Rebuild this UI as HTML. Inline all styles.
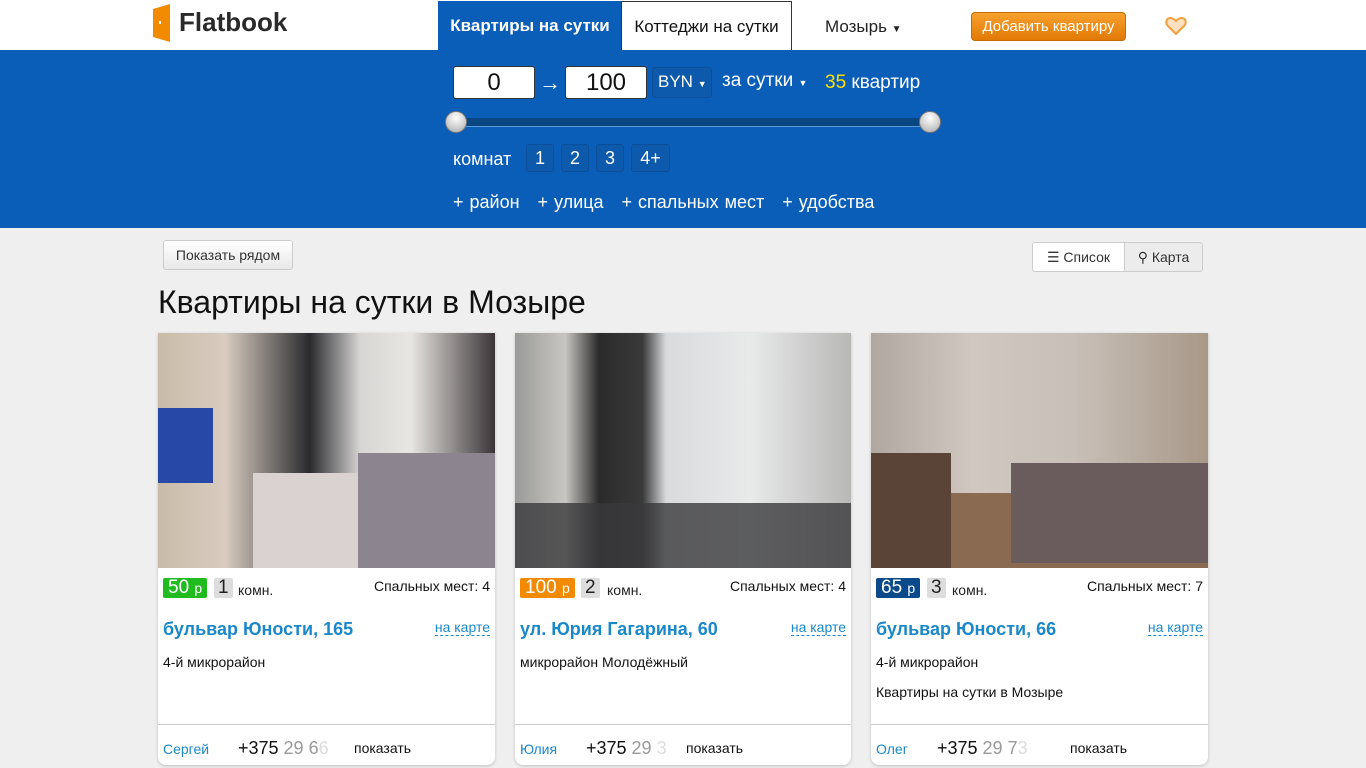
<!DOCTYPE html>
<html><head><meta charset="utf-8"><style>
*{box-sizing:border-box;margin:0;padding:0}
body{width:1366px;height:768px;overflow:hidden;background:#efefef;font-family:"Liberation Sans",sans-serif;position:relative}
.a{position:absolute}
.top{left:0;top:0;width:1366px;height:50px;background:#fff}
.blue{left:0;top:50px;width:1366px;height:178px;background:#0a5eb8}
.inp{background:#fff;border:1px solid #333;border-radius:3px;height:33px;font-size:24px;text-align:center;line-height:31px;color:#111}
.w{color:#fff}
.rb{border:1px solid #0b4f9a;background:#0d5aac;border-radius:3px;color:#fff;font-size:18px;text-align:center;height:28px;line-height:26px}
.card{background:#fff;border-radius:0 0 8px 8px;box-shadow:0 1px 3px rgba(0,0,0,.2);height:432px;top:333px}
.card .img{position:absolute;left:0;top:0;right:0;height:235px}
.pr{position:absolute;top:245px;left:5px;height:20px;font-size:19px;line-height:20px;color:#fff;padding:0 5px;border-radius:2px}
.pr small{font-size:14px}
.rm{position:absolute;top:245px;height:20px;background:#ddd;font-size:19px;line-height:20px;padding:0 4px;color:#222;border-radius:2px}
.km{position:absolute;top:249px;font-size:14px;color:#222}
.sp{position:absolute;right:5px;top:245px;font-size:14px;color:#111}
.st{position:absolute;left:5px;top:286px;font-size:18px;font-weight:bold;color:#1a88c9}
.map{position:absolute;right:5px;top:286px;font-size:14px;color:#1a88c9;border-bottom:1px dashed #1a88c9}
.d{position:absolute;left:5px;font-size:14px;color:#111}
.hr{position:absolute;left:0;right:0;top:391px;border-top:1px solid #ccc}
.nm{position:absolute;left:5px;top:408px;font-size:14px;color:#1a88c9}
.ph{position:absolute;top:405px;font-size:18px;color:#111}
.ph span{color:#999}
.ph i{font-style:normal;color:#ddd}
.sh{position:absolute;top:407px;font-size:14px;color:#111}
</style></head><body>
<div class="a top"></div>
<svg class="a" style="left:153px;top:4px" width="18" height="38"><polygon points="0,5 17,0 17,38 0,33" fill="#f28a00"/><rect x="6" y="17" width="2" height="3" fill="#fff"/></svg>
<div class="a" style="left:179px;top:7px;font-size:26px;font-weight:bold;color:#2a2a2a">Flatbook</div>
<div class="a" style="left:438px;top:1px;width:184px;height:49px;background:#0a5eb8;color:#fff;font-size:17px;font-weight:bold;line-height:49px;text-align:center">Квартиры на сутки</div>
<div class="a" style="left:621px;top:1px;width:171px;height:49px;border:1px solid #333;border-bottom:none;font-size:17px;line-height:49px;text-align:center;color:#111">Коттеджи на сутки</div>
<div class="a" style="left:825px;top:17px;font-size:17px;color:#222">Мозырь <span style="font-size:10px">▼</span></div>
<div class="a" style="left:971px;top:12px;width:155px;height:29px;border-radius:4px;background:linear-gradient(#f7a12e,#e27905);border:1px solid #c56a05;color:#fff;font-size:15px;text-align:center;line-height:27px">Добавить квартиру</div>
<svg class="a" style="left:1165px;top:16px" width="22" height="20"><path d="M11 18 L3 10 C0 7 1 2 5.5 2 C8 2 10 4 11 5 C12 4 14 2 16.5 2 C21 2 22 7 19 10 Z" fill="#fde0c0" stroke="#f0a040" stroke-width="2"/></svg>
<div class="a blue"></div>
<div class="a inp" style="left:453px;top:66px;width:82px">0</div>
<div class="a w" style="left:539px;top:70px;font-size:22px">→</div>
<div class="a inp" style="left:565px;top:66px;width:82px">100</div>
<div class="a rb" style="left:652px;top:67px;width:60px;height:31px;line-height:28px;font-size:17px;text-align:left;padding-left:5px">BYN <span style="font-size:9px">▼</span></div>
<div class="a w" style="left:722px;top:70px;font-size:19px">за сутки <span style="font-size:9px">▼</span></div>
<div class="a w" style="left:825px;top:72px;font-size:19px"><span style="color:#ffe000">35</span> квартир</div>
<div class="a" style="left:452px;top:118px;width:484px;height:9px;background:#0a4680;border-bottom:1px solid #5a9ad8"></div>
<div class="a" style="left:445px;top:111px;width:22px;height:22px;border-radius:50%;background:radial-gradient(circle at 50% 30%,#fff,#aaa);border:1px solid #777"></div>
<div class="a" style="left:919px;top:111px;width:22px;height:22px;border-radius:50%;background:radial-gradient(circle at 50% 30%,#fff,#aaa);border:1px solid #777"></div>
<div class="a w" style="left:453px;top:149px;font-size:18px">комнат</div>
<div class="a rb" style="left:526px;top:144px;width:28px">1</div>
<div class="a rb" style="left:561px;top:144px;width:28px">2</div>
<div class="a rb" style="left:596px;top:144px;width:28px">3</div>
<div class="a rb" style="left:631px;top:144px;width:39px">4+</div>
<div class="a w" style="left:453px;top:192px;font-size:18px;word-spacing:1px">+ район &nbsp;&nbsp;+ улица &nbsp;&nbsp;+ спальных мест &nbsp;&nbsp;+ удобства</div>
<div class="a" style="left:163px;top:240px;width:130px;height:30px;border:1px solid #ccc;border-radius:3px;background:linear-gradient(#fff,#e8e8e8);font-size:14px;line-height:28px;text-align:center;color:#333">Показать рядом</div>
<div class="a" style="left:1032px;top:242px;width:93px;height:30px;border:1px solid #ccc;border-radius:3px 0 0 3px;background:#fff;font-size:14px;line-height:28px;text-align:center;color:#333">☰ Список</div>
<div class="a" style="left:1124px;top:242px;width:79px;height:30px;border:1px solid #ccc;border-radius:0 3px 3px 0;background:#ececec;font-size:14px;line-height:28px;text-align:center;color:#333">⚲ Карта</div>
<div class="a" style="left:158px;top:284px;font-size:32px;color:#111">Квартиры на сутки в Мозыре</div>

<div class="a card" style="left:158px;width:337px">
<div class="img" style="background:linear-gradient(90deg,#c9bba8 0%,#d8ccc0 20%,#2a2a2e 45%,#d8d6d4 60%,#e8e6e2 75%,#3a3436 100%)"><div style="position:absolute;left:0;top:75px;width:55px;height:75px;background:#2848a8"></div><div style="position:absolute;left:95px;top:140px;width:140px;height:95px;background:#d9d2d0"></div><div style="position:absolute;left:200px;top:120px;width:137px;height:115px;background:#8c8590"></div></div>
<div class="pr" style="background:#1fbb1f">50 <small>р</small></div><div class="rm" style="left:56px">1</div><div class="km" style="left:80px">комн.</div>
<div class="sp">Спальных мест: 4</div><div class="st">бульвар Юности, 165</div><div class="map">на карте</div>
<div class="d" style="top:321px">4-й микрорайон</div><div class="hr"></div>
<div class="nm">Сергей</div><div class="ph" style="left:80px">+375 <span>29 6</span><i>6</i></div><div class="sh" style="left:196px">показать</div></div>

<div class="a card" style="left:515px;width:336px">
<div class="img" style="background:linear-gradient(90deg,#9a9a98 0%,#c8c6c2 15%,#2a2a2a 25%,#3a3a3a 38%,#d8dadc 45%,#e8eaea 70%,#b8b8b6 100%)"><div style="position:absolute;left:0;top:170px;right:0;height:65px;background:#3a3a3c;opacity:.8"></div></div>
<div class="pr" style="background:#f28a00">100 <small>р</small></div><div class="rm" style="left:66px">2</div><div class="km" style="left:92px">комн.</div>
<div class="sp">Спальных мест: 4</div><div class="st">ул. Юрия Гагарина, 60</div><div class="map">на карте</div>
<div class="d" style="top:321px">микрорайон Молодёжный</div><div class="hr"></div>
<div class="nm">Юлия</div><div class="ph" style="left:71px">+375 <span>29</span> <i>3</i></div><div class="sh" style="left:171px">показать</div></div>

<div class="a card" style="left:871px;width:337px">
<div class="img" style="background:linear-gradient(90deg,#b0a8a0 0%,#d0c8c0 30%,#c8c0b8 60%,#a89888 100%)"><div style="position:absolute;left:0;top:160px;right:0;height:75px;background:#8a6a50"></div><div style="position:absolute;left:140px;top:130px;width:197px;height:100px;background:#6a5c5c"></div><div style="position:absolute;left:0;top:120px;width:80px;height:115px;background:#5a4438"></div></div>
<div class="pr" style="background:#0a4a8a">65 <small>р</small></div><div class="rm" style="left:56px">3</div><div class="km" style="left:81px">комн.</div>
<div class="sp">Спальных мест: 7</div><div class="st">бульвар Юности, 66</div><div class="map">на карте</div>
<div class="d" style="top:321px">4-й микрорайон</div><div class="d" style="top:351px">Квартиры на сутки в Мозыре</div><div class="hr"></div>
<div class="nm">Олег</div><div class="ph" style="left:66px">+375 <span>29 7</span><i>3</i></div><div class="sh" style="left:199px">показать</div></div>
</body></html>
